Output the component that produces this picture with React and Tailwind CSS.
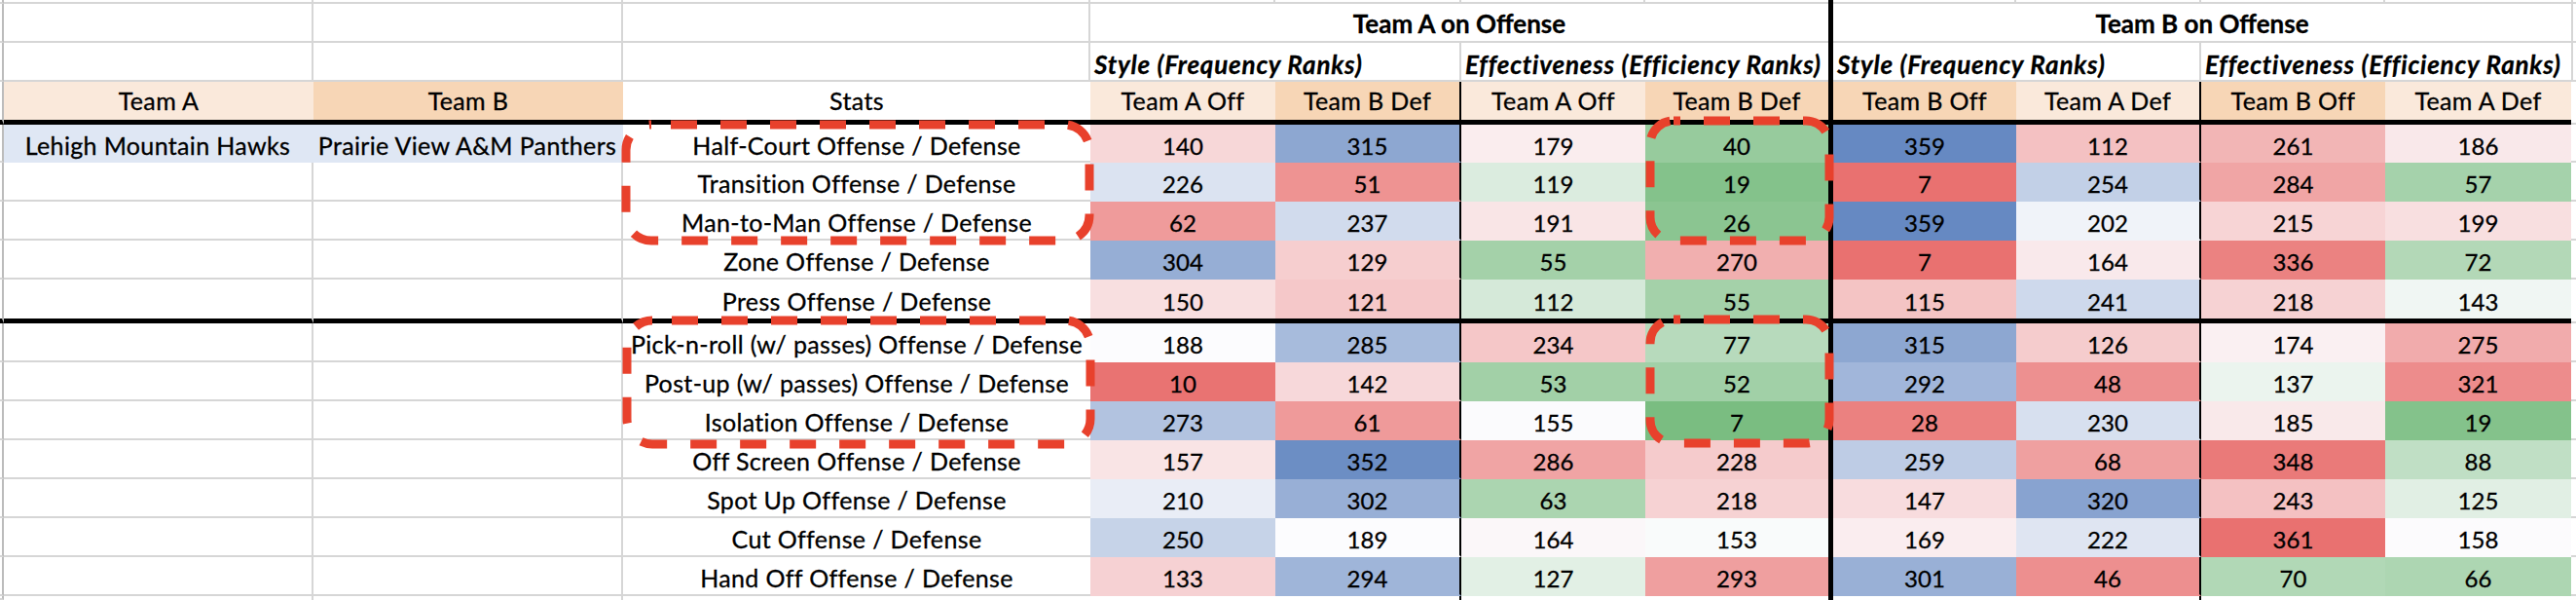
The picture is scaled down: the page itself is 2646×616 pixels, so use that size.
import React from 'react';

const RED = [233, 113, 112];
const BLUE = [102, 137, 194];
const GREEN = [122, 189, 129];
const WHITE = [252, 252, 254];

const ROWS = [
  ['Half-Court Offense / Defense', [140, 315, 179, 40, 359, 112, 261, 186]],
  ['Transition Offense / Defense', [226, 51, 119, 19, 7, 254, 284, 57]],
  ['Man-to-Man Offense / Defense', [62, 237, 191, 26, 359, 202, 215, 199]],
  ['Zone Offense / Defense', [304, 129, 55, 270, 7, 164, 336, 72]],
  ['Press Offense / Defense', [150, 121, 112, 55, 115, 241, 218, 143]],
  ['Pick-n-roll (w/ passes) Offense / Defense', [188, 285, 234, 77, 315, 126, 174, 275]],
  ['Post-up (w/ passes) Offense / Defense', [10, 142, 53, 52, 292, 48, 137, 321]],
  ['Isolation Offense / Defense', [273, 61, 155, 7, 28, 230, 185, 19]],
  ['Off Screen Offense / Defense', [157, 352, 286, 228, 259, 68, 348, 88]],
  ['Spot Up Offense / Defense', [210, 302, 63, 218, 147, 320, 243, 125]],
  ['Cut Offense / Defense', [250, 189, 164, 153, 169, 222, 361, 158]],
  ['Hand Off Offense / Defense', [133, 294, 127, 293, 301, 46, 70, 66]],
];

const STYLE_COLS = [0, 1, 4, 5];
const EFF_COLS = [2, 3, 6, 7];

function stats(cols) {
  const vals = [];
  ROWS.forEach(([, v]) => cols.forEach((c) => vals.push(v[c])));
  vals.sort((a, b) => a - b);
  const n = vals.length;
  const med = n % 2 ? vals[(n - 1) / 2] : (vals[n / 2 - 1] + vals[n / 2]) / 2;
  return { min: vals[0], max: vals[n - 1], med };
}
const S_STYLE = stats(STYLE_COLS);
const S_EFF = stats(EFF_COLS);

function mix(a, b, t) {
  return `rgb(${a.map((v, i) => Math.round(v + (b[i] - v) * t)).join(',')})`;
}

function colorFor(col, v) {
  const isStyle = STYLE_COLS.includes(col);
  const s = isStyle ? S_STYLE : S_EFF;
  const lo = isStyle ? RED : GREEN;
  const hi = isStyle ? BLUE : RED;
  if (v <= s.med) {
    const t = (s.med - v) / (s.med - s.min);
    return mix(WHITE, lo, Math.max(0, Math.min(1, t)));
  }
  const t = (v - s.med) / (s.max - s.med);
  return mix(WHITE, hi, Math.max(0, Math.min(1, t)));
}

const DW = ['w-[190px]', 'w-[191px]', 'w-[189px]', 'w-[188px]', 'w-[188px]', 'w-[190px]', 'w-[189px]', 'w-[191px]'];

const GB = 'border-b-2 border-b-[#d6d6d6]';
const GR = 'border-r-2 border-r-[#d6d6d6]';
const TB = 'border-b-[5px] border-b-black';
const BR = 'border-r-2 border-r-black';
const LIGHT = 'bg-[#fae9db]';
const DARK = 'bg-[#f7d6b6]';
const LBL = 'text-[25px] tracking-[0.35px]';
const HI = 'text-[26px] tracking-[0.8px] font-bold italic pt-[6px] !justify-start pl-[4px]';

function C({ w, className = '', children, style }) {
  return (
    <div
      style={style}
      className={`shrink-0 h-full flex items-center justify-center overflow-hidden whitespace-nowrap ${w} ${className}`}
    >
      {children}
    </div>
  );
}

function Gutter({ thick }) {
  return <C w="w-[4px]" className={`border-r-2 border-r-[#bcbcbc] ${thick ? TB : GB}`} />;
}
function Thick() {
  return <C w="w-[5px]" className="bg-black" />;
}
function Rest({ line }) {
  return <C w="w-[5px]" className={`${GB} ${line ? 'border-l-2 border-l-[#d6d6d6]' : ''}`} />;
}

function DashedBoxes() {
  const boxes = [
    { x: 643, y: 128, w: 476, h: 119, r: 26, o: 31 },
    { x: 1695, y: 124, w: 184, h: 123, r: 24, o: 20 },
    { x: 644, y: 329, w: 476, h: 127, r: 26, o: 31 },
    { x: 1695, y: 328, w: 184, h: 127, r: 24, o: 20 },
  ];
  return (
    <svg className="absolute left-0 top-0 pointer-events-none" width="2646" height="616" viewBox="0 0 2646 616">
      {boxes.map((b, i) => (
        <rect
          key={i}
          x={b.x}
          y={b.y}
          width={b.w}
          height={b.h}
          rx={b.r}
          ry={b.r}
          fill="none"
          stroke="#e8412c"
          strokeWidth="9"
          strokeDasharray="27 24"
          strokeDashoffset={b.o}
        />
      ))}
    </svg>
  );
}

export default function App() {
  return (
    <div className="relative w-[2646px] h-[616px] overflow-hidden bg-white text-black font-['Lato',sans-serif] text-[24px] leading-[29px] [-webkit-text-stroke:0.3px_#000]">
      <div className="flex flex-col">
        {/* row 0 */}
        <div className="flex h-[4px]">
          <Gutter />
          <C w="w-[318px]" className={`${GR} ${GB}`} />
          <C w="w-[318px]" className={`${GR} ${GB}`} />
          <C w="w-[480px]" className={`${GR} ${GB}`} />
          <C w={DW[0]} className={`${GR} ${GB}`} />
          <C w={DW[1]} className={`${GR} ${GB}`} />
          <C w={DW[2]} className={`${GR} ${GB}`} />
          <C w={DW[3]} className={GB} />
          <Thick />
          <C w={DW[4]} className={`${GR} ${GB}`} />
          <C w={DW[5]} className={`${GR} ${GB}`} />
          <C w={DW[6]} className={`${GR} ${GB}`} />
          <C w={DW[7]} className={GB} />
          <Rest line />
        </div>
        {/* row 1 */}
        <div className="flex h-[40px]">
          <Gutter />
          <C w="w-[318px]" className={`${GR} ${GB}`} />
          <C w="w-[318px]" className={`${GR} ${GB}`} />
          <C w="w-[480px]" className={`${GR} ${GB}`} />
          <C w="w-[758px]" className={`${GB} font-bold text-[26px] pt-[2px]`}>Team A on Offense</C>
          <Thick />
          <C w="w-[758px]" className={`${GB} font-bold text-[26px] pt-[2px]`}>Team B on Offense</C>
          <Rest line />
        </div>
        {/* row 2 */}
        <div className="flex h-[40px]">
          <Gutter />
          <C w="w-[318px]" className={`${GR} ${GB}`} />
          <C w="w-[318px]" className={`${GR} ${GB}`} />
          <C w="w-[480px]" className={`${GR} ${GB}`} />
          <C w="w-[381px]" className={`${GR} ${GB} ${HI}`}>Style (Frequency Ranks)</C>
          <C w="w-[377px]" className={`${GB} ${HI}`}>Effectiveness (Efficiency Ranks)</C>
          <Thick />
          <C w="w-[378px]" className={`${GR} ${GB} ${HI}`}>Style (Frequency Ranks)</C>
          <C w="w-[380px]" className={`${GB} ${HI}`}>Effectiveness (Efficiency Ranks)</C>
          <Rest line />
        </div>
        {/* row 3 headers */}
        <div className="flex h-[44px]">
          <Gutter thick />
          <C w="w-[318px]" className={`${LIGHT} ${TB} ${LBL}`}>Team A</C>
          <C w="w-[318px]" className={`${DARK} ${TB} ${LBL}`}>Team B</C>
          <C w="w-[480px]" className={`${TB} ${LBL}`}>Stats</C>
          <C w={DW[0]} className={`${LIGHT} ${TB} ${LBL}`}>Team A Off</C>
          <C w={DW[1]} className={`${DARK} ${TB} ${BR} ${LBL}`}>Team B Def</C>
          <C w={DW[2]} className={`${LIGHT} ${TB} ${LBL}`}>Team A Off</C>
          <C w={DW[3]} className={`${DARK} ${TB} ${LBL}`}>Team B Def</C>
          <Thick />
          <C w={DW[4]} className={`${DARK} ${TB} ${LBL}`}>Team B Off</C>
          <C w={DW[5]} className={`${LIGHT} ${TB} ${BR} ${LBL}`}>Team A Def</C>
          <C w={DW[6]} className={`${DARK} ${TB} ${LBL}`}>Team B Off</C>
          <C w={DW[7]} className={`${LIGHT} ${TB} ${LBL}`}>Team A Def</C>
          <Rest />
        </div>
        {/* data rows */}
        {ROWS.map(([label, vals], ri) => {
          const thick = ri === 4;
          const h = ri === 0 ? 'h-[39px]' : thick ? 'h-[45px]' : 'h-[40px]';
          const bottom = thick ? TB : GB;
          const clearBottom = thick ? TB : 'border-b-2 border-b-transparent';
          const first = ri === 0;
          return (
            <div key={ri} className={`flex ${h}`}>
              <Gutter thick={thick} />
              <C
                w="w-[318px]"
                className={`${first ? `bg-[#dfe7f4] ${clearBottom} border-r-2 border-r-transparent` : `${GR} ${bottom}`} pt-[5px] ${LBL}`}
              >
                {first ? 'Lehigh Mountain Hawks' : ''}
              </C>
              <C
                w="w-[318px]"
                className={`${first ? `bg-[#dfe7f4] ${clearBottom} border-r-2 border-r-transparent` : `${GR} ${bottom}`} pt-[5px] ${LBL}`}
              >
                {first ? 'Prairie View A&M Panthers' : ''}
              </C>
              <C w="w-[480px]" className={`${bottom} pt-[5px] ${LBL}`}>
                {label}
              </C>
              {vals.slice(0, 4).map((v, ci) => (
                <C
                  key={ci}
                  w={DW[ci]}
                  style={{ backgroundColor: colorFor(ci, v) }}
                  className={`${clearBottom} ${ci === 1 ? BR : ''} pt-[5px]`}
                >
                  {v}
                </C>
              ))}
              <Thick />
              {vals.slice(4).map((v, k) => {
                const ci = k + 4;
                return (
                  <C
                    key={ci}
                    w={DW[ci]}
                    style={{ backgroundColor: colorFor(ci, v) }}
                    className={`${clearBottom} ${ci === 5 ? BR : ''} pt-[5px]`}
                  >
                    {v}
                  </C>
                );
              })}
              <Rest />
            </div>
          );
        })}
        {/* partial row */}
        <div className="flex h-[4px]">
          <Gutter />
          <C w="w-[318px]" className={GR} />
          <C w="w-[318px]" className={GR} />
          <C w="w-[480px]" />
          <C w={DW[0]} />
          <C w={DW[1]} className="border-r-2 border-r-black" />
          <C w={DW[2]} />
          <C w={DW[3]} />
          <Thick />
          <C w={DW[4]} />
          <C w={DW[5]} className="border-r-2 border-r-black" />
          <C w={DW[6]} />
          <C w={DW[7]} />
          <C w="w-[5px]" />
        </div>
      </div>
      <DashedBoxes />
    </div>
  );
}
